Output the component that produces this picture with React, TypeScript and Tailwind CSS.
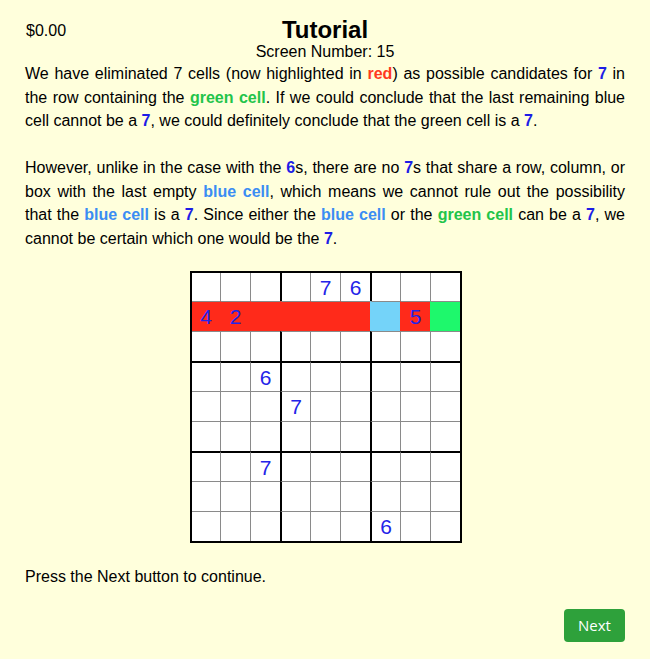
import React from "react";

const Red = ({ children }: { children: React.ReactNode }) => (
  <span className="font-bold text-[#ff3a1f]">{children}</span>
);
const Green = ({ children }: { children: React.ReactNode }) => (
  <span className="font-bold text-[#22c44a]">{children}</span>
);
const Blue = ({ children }: { children: React.ReactNode }) => (
  <span className="font-bold text-[#3b8df3]">{children}</span>
);
const Num = ({ children }: { children: React.ReactNode }) => (
  <span className="font-bold text-[#1d1de6]">{children}</span>
);

type Fill = "" | "red" | "blue" | "green";

const values: string[][] = [
  ["", "", "", "", "7", "6", "", "", ""],
  ["4", "2", "", "", "", "", "", "5", ""],
  ["", "", "", "", "", "", "", "", ""],
  ["", "", "6", "", "", "", "", "", ""],
  ["", "", "", "7", "", "", "", "", ""],
  ["", "", "", "", "", "", "", "", ""],
  ["", "", "7", "", "", "", "", "", ""],
  ["", "", "", "", "", "", "", "", ""],
  ["", "", "", "", "", "", "6", "", ""],
];

const fillRow1: Fill[] = ["red", "red", "red", "red", "red", "red", "blue", "red", "green"];

function Cell({ r, c }: { r: number; c: number }) {
  const fill: Fill = r === 1 ? fillRow1[c] : "";
  const top = r === 0 ? "border-t-0" : r % 3 === 0 ? "border-t-2 border-t-black" : "border-t border-t-[#8a8a8a]";
  let left: string;
  if (c === 0) left = "border-l-0";
  else if (fill === "red") left = c % 3 === 0 ? "border-l-2 border-l-[#ff2a1a]" : "border-l border-l-[#ff2a1a]";
  else if (fill === "blue") left = c % 3 === 0 ? "border-l-2 border-l-[#74d3f9]" : "border-l border-l-[#74d3f9]";
  else if (fill === "green") left = c % 3 === 0 ? "border-l-2 border-l-[#1ef86c]" : "border-l border-l-[#1ef86c]";
  else left = c % 3 === 0 ? "border-l-2 border-l-black" : "border-l border-l-[#8a8a8a]";
  const bg =
    fill === "red" ? "bg-[#ff2a1a]" : fill === "blue" ? "bg-[#74d3f9]" : fill === "green" ? "bg-[#1ef86c]" : "bg-white";
  const w = c === 0 ? "w-[28px]" : "w-[30px]";
  const h = r === 0 ? "h-[28px]" : "h-[30px]";
  return (
    <div className={`box-border ${w} ${h} ${top} ${left} ${bg} flex items-center justify-center text-[21px] leading-none text-[#2323e8]`}>
      {values[r][c]}
    </div>
  );
}

export default function App() {
  return (
    <div className="min-h-screen bg-[#ffffdc] font-['Liberation_Sans',Arial,sans-serif] text-[16px] text-black">
      <div className="px-[25px] pt-[16px] pb-[17px]">
        <div className="grid grid-cols-[1fr_auto_1fr] items-start">
          <div className="pt-[6px] pl-[1px] leading-[18px]">$0.00</div>
          <div className="text-center">
            <div className="text-[24px] font-bold leading-[27px]">Tutorial</div>
            <div className="leading-[17px]">Screen Number: 15</div>
          </div>
          <div />
        </div>

        <p className="mt-[2px] text-justify leading-[23.5px]">
          We have eliminated 7 cells (now highlighted in <Red>red</Red>) as possible candidates for <Num>7</Num> in
          the row containing the <Green>green cell</Green>. If we could conclude that the last remaining blue cell
          cannot be a <Num>7</Num>, we could definitely conclude that the green cell is a <Num>7</Num>.
        </p>
        <p className="mt-[23.5px] text-justify leading-[23.5px]">
          However, unlike in the case with the <Num>6</Num>s, there are no <Num>7</Num>s that share a row, column, or
          box with the last empty <Blue>blue cell</Blue>, which means we cannot rule out the possibility that the{" "}
          <Blue>blue cell</Blue> is a <Num>7</Num>. Since either the <Blue>blue cell</Blue> or the{" "}
          <Green>green cell</Green> can be a <Num>7</Num>, we cannot be certain which one would be the <Num>7</Num>.
        </p>

        <div className="mt-[21px] flex justify-center pl-[2px]">
          <div className="box-border flex flex-col border-2 border-black">
            {values.map((row, r) => (
              <div key={r} className="flex">
                {row.map((_, c) => (
                  <Cell key={c} r={r} c={c} />
                ))}
              </div>
            ))}
          </div>
        </div>

        <p className="mt-[22px] leading-[23.5px]">Press the Next button to continue.</p>

        <div className="mt-[20px] flex justify-end">
          <button className="h-[33px] w-[61px] rounded-[4px] bg-[#2ea13b] font-['Open_Sans',sans-serif] text-[15px] text-white">
            Next
          </button>
        </div>
      </div>
    </div>
  );
}
